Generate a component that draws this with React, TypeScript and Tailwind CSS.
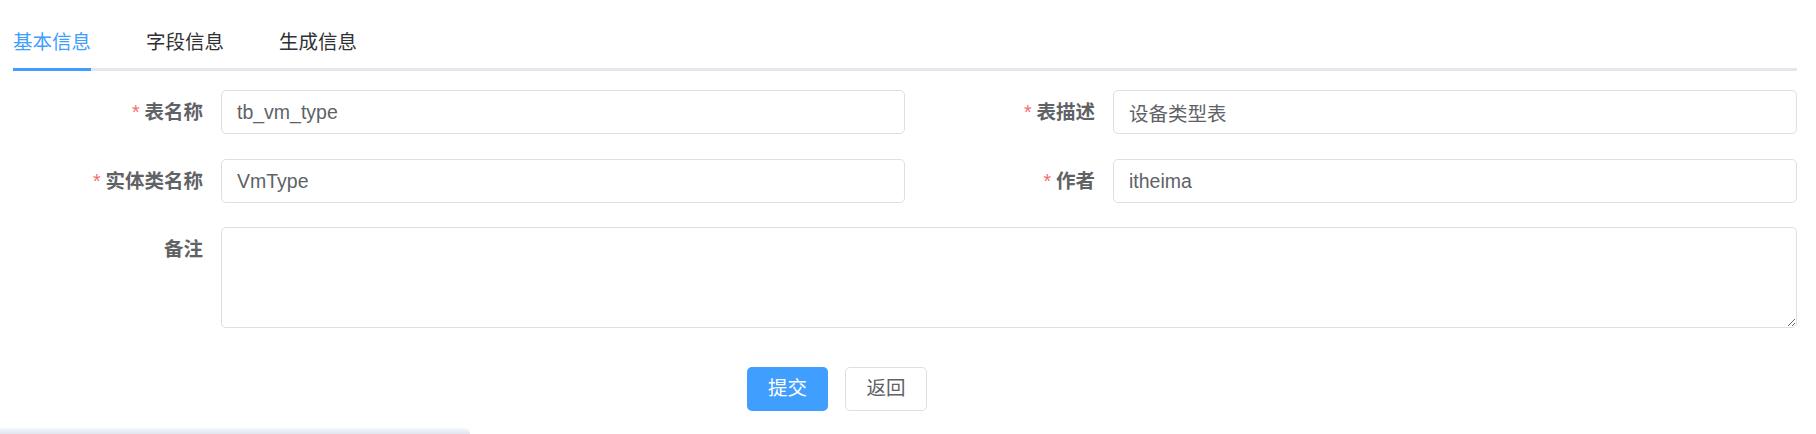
import React from "react";

/* ─── Types ──────────────────────────────────── */

interface FieldProps {
  label: string;
  value?: string;
  required?: boolean;
}

/* ─── Tabs ───────────────────────────────────── */

const tabs = ["基本信息", "字段信息", "生成信息"];

function TabBar({ active = 0 }: { active?: number }) {
  return (
    <div className="flex border-b-[3px] border-[#e4e7ed]">
      {tabs.map((tab, i) => (
        <div
          key={tab}
          className={
            i === 0
              ? "-mb-[3px] flex pr-[27.5px]"
              : "-mb-[3px] flex px-[27.5px]"
          }
        >
          <span
            className={
              i === active
                ? "border-b-[3px] border-[#409eff] text-[19.5px] leading-[51px] text-[#409eff]"
                : "border-b-[3px] border-transparent text-[19.5px] leading-[51px] text-[#303133]"
            }
          >
            {tab}
          </span>
        </div>
      ))}
    </div>
  );
}

/* ─── Form bits ──────────────────────────────── */

function Label({ label, required }: { label: string; required?: boolean }) {
  return (
    <label className="w-[208px] shrink-0 pr-[18px] text-right text-[19.5px] font-bold leading-[44px] text-[#606266]">
      {required && <span className="mr-[5px] font-normal text-[#f56c6c]">*</span>}
      {label}
    </label>
  );
}

function Field({ label, value = "", required }: FieldProps) {
  return (
    <div className="flex">
      <Label label={label} required={required} />
      <input
        defaultValue={value}
        className="h-[44px] min-w-0 flex-1 rounded-[5px] border border-[#dcdfe6] bg-white px-[15px] text-[19.5px] text-[#606266] outline-none"
      />
    </div>
  );
}

/* ─── Page ───────────────────────────────────── */

export default function App() {
  return (
    <div className="flex h-[434px] w-[1816px] flex-col overflow-hidden bg-white font-['Liberation_Sans','Noto_Sans_CJK_SC',sans-serif]">
      <div className="pl-[13px] pr-[19px] pt-[17px]">
        <TabBar active={0} />

        {/* Basic info form */}
        <form className="mt-[19px] flex flex-col">
          <div className="mb-[25px] grid grid-cols-2">
            <Field label="表名称" value="tb_vm_type" required />
            <Field label="表描述" value="设备类型表" required />
          </div>
          <div className="mb-[24px] grid grid-cols-2">
            <Field label="实体类名称" value="VmType" required />
            <Field label="作者" value="itheima" required />
          </div>
          <div className="flex">
            <Label label="备注" />
            <textarea className="h-[101px] min-w-0 flex-1 resize-y rounded-[5px] border border-[#dcdfe6] bg-white px-[15px] py-[7px] text-[19.5px] text-[#606266] outline-none" />
          </div>

          {/* Actions */}
          <div className="mt-[39px] flex gap-[17px] pl-[734px]">
            <button
              type="button"
              className="h-[44px] w-[81px] rounded-[5px] bg-[#409eff] text-[19.5px] text-white"
            >
              提交
            </button>
            <button
              type="button"
              className="h-[44px] w-[82px] rounded-[5px] border border-[#dcdfe6] bg-white text-[19.5px] text-[#606266]"
            >
              返回
            </button>
          </div>
        </form>
      </div>

      {/* Bottom shadow strip */}
      <div className="mt-[17px] h-[6px] w-[470px] rounded-tr-full bg-linear-to-b from-[#f7f9fc] to-[#dfe5ee]" />
    </div>
  );
}
